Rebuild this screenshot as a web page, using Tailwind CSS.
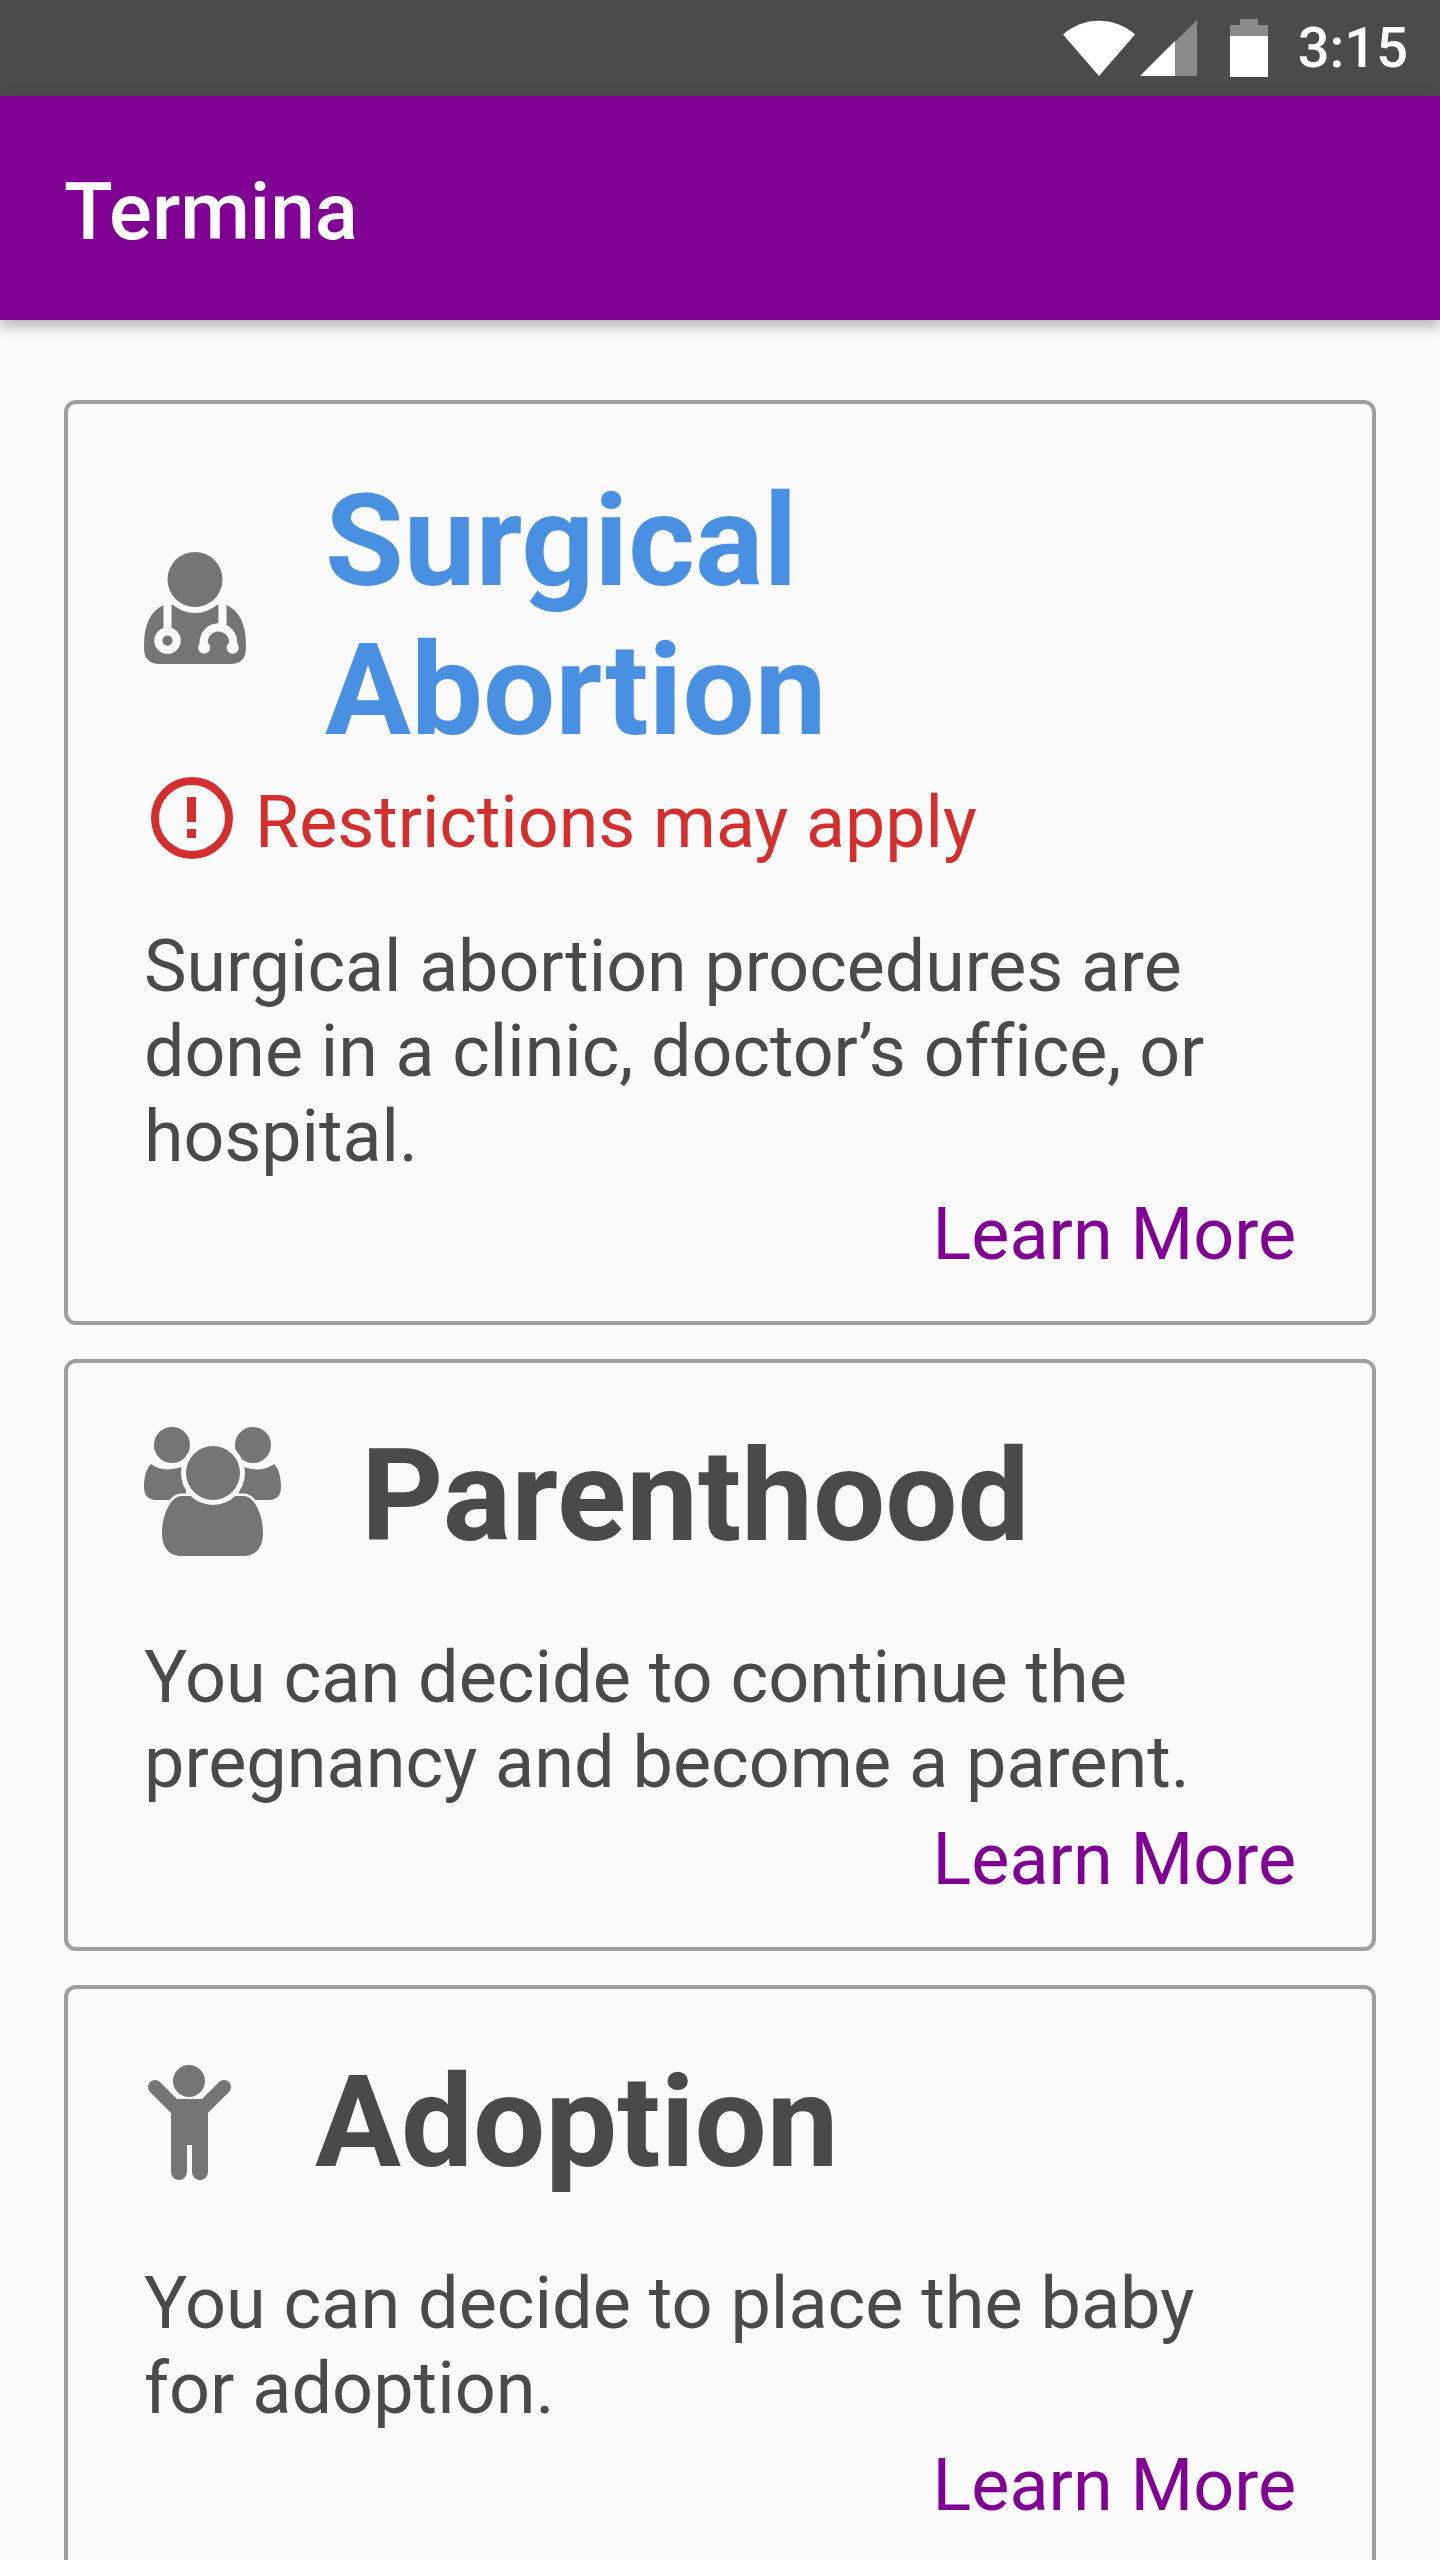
<!DOCTYPE html>
<html><head><meta charset="utf-8"><script src="https://cdn.jsdelivr.net/npm/@tailwindcss/browser@4"></script></head>
<body class="m-0 bg-[#fafafa] font-['Roboto',sans-serif] [font-variant-ligatures:none] w-[1440px] h-[2560px] overflow-hidden">
<div class="h-[96px] bg-[#4b4b4b] flex items-center justify-end pr-[32px] text-white">
  <svg width="72" height="56" viewBox="0 0 72 56"><path d="M0 14.500C20 -4 52 -4 72 14.500L36 56Z" fill="#fff"/></svg>
  <svg class="ml-[5px]" width="58" height="58" viewBox="0 0 58 58"><path d="M0 57L57 1V57Z" fill="#8a8a8a"/><path d="M0 57L35 22V57Z" fill="#fff"/></svg>
  <svg class="ml-[32px]" width="38" height="58" viewBox="0 0 38 58"><path d="M10 0H28V6H38V58H0V6H10Z" fill="#8a8a8a"/><path d="M0 17H38V58H0Z" fill="#fff"/></svg>
  <span class="ml-[30px] text-[56px] leading-none font-medium">3:15</span>
</div>
<div class="h-[224px] bg-[#800094] flex items-center pl-[64px] pt-[8px] shadow-[0_6px_14px_rgba(0,0,0,0.3)] text-white text-[80px] font-medium relative">Termina</div>
<div class="pt-[80px] px-[64px] flex flex-col gap-[34px]">

<div class="h-[925px] border-[4px] border-[#9e9e9e] rounded-[12px] px-[76px] pt-[64px]">
  <div class="flex items-center h-[296px]">
    <svg class="w-[102px] h-[112px] shrink-0 mt-[-16px]" viewBox="0 0 100 110">
      <path fill="#757575" d="M19 52C6 58 0 72 0 90V95C0 105 6 110 15 110H85C94 110 100 105 100 95V90C100 72 94 58 81 52H19Z"/>
      <circle cx="50" cy="27" r="33" fill="#fafafa"/>
      <circle cx="50" cy="27" r="27" fill="#757575"/>
      <g fill="none" stroke="#fafafa" stroke-width="8">
        <path d="M23 50V80"/><path d="M77 50V74"/>
        <circle cx="23" cy="87" r="9"/>
        <path d="M59 94C56 80 66 74 73 74C80 74 90 80 87 94"/>
      </g>
      <circle cx="59" cy="94" r="6" fill="#fafafa"/>
      <circle cx="87" cy="94" r="6" fill="#fafafa"/>
      <circle cx="23" cy="87" r="4.500" fill="#757575"/>
    </svg>
    <div class="ml-[79px] text-[128px] leading-[149px] font-bold text-[#4a90e2]">Surgical<br>Abortion</div>
  </div>
  <div class="flex items-center h-[90px] mt-[14px]">
    <svg class="w-[84px] h-[84px] shrink-0 ml-[6px] mt-[-10px]" viewBox="0 0 84 84"><circle cx="42" cy="42" r="37" fill="none" stroke="#d32f2f" stroke-width="8"/><rect x="37" y="21" width="9" height="25" fill="#d32f2f"/><rect x="37" y="53" width="9" height="9" fill="#d32f2f"/></svg>
    <span class="ml-[21px] text-[71.7px] text-[#d32f2f]">Restrictions may apply</span>
  </div>
  <p class="mt-[56px] text-[71.7px] leading-[85px] text-[#4a4a4a]">Surgical abortion procedures are done in a clinic, doctor’s office, or hospital.</p>
  <div class="text-right text-[71.9px] leading-[85px] text-[#800094] mt-[13px]">Learn More</div>
</div>

<div class="h-[592px] border-[4px] border-[#9e9e9e] rounded-[12px] px-[76px] pt-[60px]">
  <div class="flex items-center h-[140px]">
    <svg class="w-[138px] h-[130px] shrink-0 mt-[-2px]" viewBox="0 0 138 130">
      <g fill="#757575">
        <circle cx="28" cy="18" r="18"/><circle cx="109" cy="18" r="18"/>
        <path d="M7 37C15 44 30 44 42 38V73H12C4 73 0 68 0 60C0 50 2 42 7 37Z"/>
        <path d="M130 37C122 44 107 44 95 38V73H125C133 73 137 68 137 60C137 50 135 42 130 37Z"/>
        <path stroke="#fafafa" stroke-width="5" paint-order="stroke" d="M36 69C26 71 18 88 18 106C18 120 25 129 37 129H100C112 129 119 120 119 106C119 88 111 71 101 69Z"/>
      </g>
      <circle cx="69" cy="46" r="32" fill="#fafafa"/>
      <circle cx="69" cy="46" r="27" fill="#757575"/>
    </svg>
    <div class="ml-[79px] mt-[6px] text-[128px] leading-[148px] font-bold text-[#4a4a4a]">Parenthood</div>
  </div>
  <p class="mt-[72px] text-[72px] leading-[85px] text-[#4a4a4a]">You can decide to continue the pregnancy and become a parent.</p>
  <div class="text-right text-[71.9px] leading-[85px] text-[#800094] mt-[12px]">Learn More</div>
</div>

<div class="h-[700px] border-[4px] border-[#9e9e9e] rounded-[12px] px-[76px] pt-[60px]">
  <div class="flex items-center h-[140px]">
    <svg class="w-[83px] h-[116px] shrink-0 ml-[4px] mt-[5px]" viewBox="0 0 83 116" fill="#757575">
      <circle cx="41" cy="17" r="16"/>
      <path d="M7 23L30 46M76 23L53 46" stroke="#757575" stroke-width="14" stroke-linecap="round"/>
      <path d="M23 49V108A8 8 0 0 0 39 108V81H44V108A8 8 0 0 0 60 108V49L54 35H29Z"/>
    </svg>
    <div class="ml-[84px] mt-[6px] text-[128px] leading-[148px] font-bold text-[#4a4a4a]">Adoption</div>
  </div>
  <p class="mt-[72px] text-[72px] leading-[85px] text-[#4a4a4a]">You can decide to place the baby for adoption.</p>
  <div class="text-right text-[71.9px] leading-[85px] text-[#800094] mt-[12px]">Learn More</div>
</div>

</div>
</body></html>
